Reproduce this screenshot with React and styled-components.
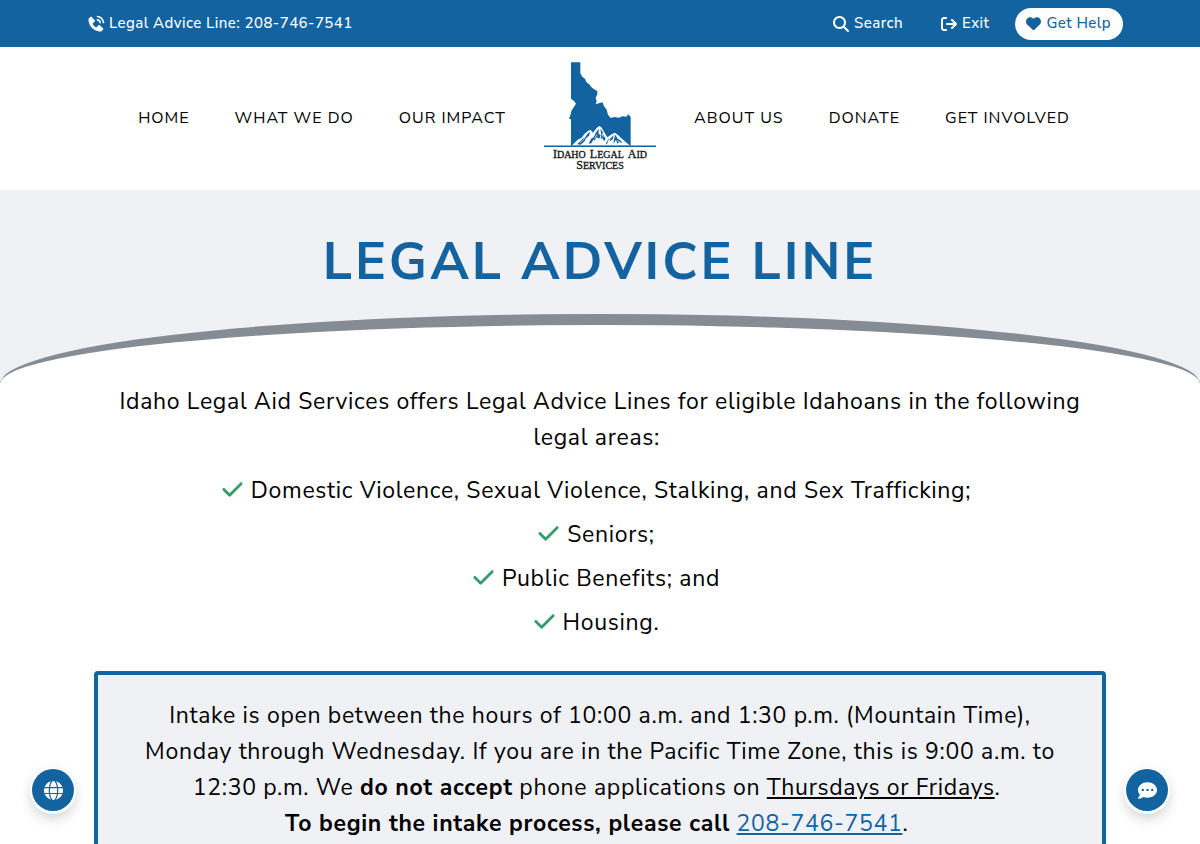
import React from "react";
import styled, { createGlobalStyle } from "styled-components";
import { BiSolidPhoneCall } from "react-icons/bi";
import {
    FaArrowRightFromBracket,
    FaCheck,
    FaCommentDots,
    FaGlobe,
    FaHeart,
    FaMagnifyingGlass,
} from "react-icons/fa6";

const blue = "#1263a0";
const pale = "#eff1f5";

const GlobalStyle = createGlobalStyle`
    * {
        box-sizing: border-box;
    }

    body {
        margin: 0;
        overflow: hidden;
        background: #fff;
        color: #000;
        font-family: "Nunito Sans", Nunito, Lato, sans-serif;
        font-size: 16px;
    }
`;

const TopBar = styled.div`
    display: flex;
    align-items: center;
    justify-content: space-between;
    height: 47px;
    padding: 0 77px 0 86px;
    background: ${blue};
`;

const TopLinks = styled.div`
    display: flex;
    align-items: center;
    gap: 26px;
`;

const TopLink = styled.a`
    display: flex;
    align-items: center;
    gap: ${({ $tight }) => ($tight ? "3px" : "5px")};
    height: 32px;
    padding: ${({ $pill }) => ($pill ? "0 12px 2px 11px" : "0 0 2px")};
    margin-left: ${({ $spaced }) => ($spaced ? "12px" : "0")};
    border-radius: 16px;
    background: ${({ $pill }) => ($pill ? "#fff" : "transparent")};
    color: ${({ $pill }) => ($pill ? blue : "#fff")};
    font-size: 15px;
    font-weight: 500;
    letter-spacing: 0.03em;
    line-height: 20px;
    text-decoration: none;

    svg {
        margin-top: 2px;
    }
`;

const Header = styled.header`
    display: flex;
    align-items: center;
    justify-content: center;
    gap: 38px;
    height: 143px;
    padding-bottom: 2px;
`;

const Nav = styled.nav`
    display: flex;
    flex: 1;
    justify-content: ${({ $side }) => ($side === "left" ? "flex-end" : "flex-start")};
    gap: 45px;
`;

const NavLink = styled.a`
    color: #000;
    font-size: 16px;
    letter-spacing: 1px;
    line-height: 24px;
    text-decoration: none;
    text-transform: uppercase;
    white-space: nowrap;
`;

const LogoLink = styled.a`
    display: flex;
    flex-direction: column;
    align-items: center;
    width: 112px;
    padding-bottom: 2px;
    color: #111;
    text-decoration: none;

    svg {
        display: block;
        width: 100%;
        height: auto;
        margin-bottom: 2px;
    }
`;

const LogoName = styled.span`
    display: flex;
    gap: 4px;
    font-family: "Liberation Serif", serif;
    font-size: 10px;
    line-height: 11px;
    text-transform: uppercase;
    white-space: nowrap;
    -webkit-text-stroke: 0.3px #111;

    span::first-letter {
        font-size: 12px;
    }
`;

const Hero = styled.section`
    padding-top: 36px;
    background: ${pale};
`;

const Title = styled.h1`
    margin: 0;
    color: ${blue};
    font-size: 52px;
    font-weight: 700;
    letter-spacing: 3px;
    line-height: 72px;
    text-align: center;
    text-transform: uppercase;
`;

const Arc = styled.div`
    height: 70px;
    margin-top: 16px;
    border-top: 11px solid #868c94;
    border-radius: 50% 50% 0 0 / 100% 100% 0 0;
    background: #fff;
`;

const Content = styled.main`
    max-width: 1012px;
    margin: 0 auto;
    font-size: 23px;
    letter-spacing: 0.03em;
    line-height: 36px;
    text-align: center;
`;

const Intro = styled.p`
    margin: 0;
    padding: 0 12px;
`;

const Areas = styled.ul`
    display: flex;
    flex-direction: column;
    gap: 8px;
    margin: 17px 0 30px;
    padding: 0 8px 0 0;
    list-style: none;
`;

const Area = styled.li`
    display: flex;
    align-items: center;
    justify-content: center;
    gap: 7px;

    svg {
        margin-bottom: 3px;
        color: #369c6c;
    }
`;

const Notice = styled.section`
    padding: 23px 40px 40px;
    border: 4px solid ${blue};
    border-radius: 4px;
    background: ${pale};

    p {
        margin: 0;
    }

    a {
        color: ${blue};
    }
`;

const RoundButton = styled.button`
    position: fixed;
    bottom: 33px;
    ${({ $side }) => $side}: 32px;
    display: flex;
    align-items: center;
    justify-content: center;
    width: 42px;
    height: 42px;
    padding: 0;
    border: 0;
    border-radius: 50%;
    background: ${blue};
    box-shadow: 0 1px 0 2px #fff, 0 6px 14px rgba(0, 0, 0, 0.22);
    color: #fff;
`;

const areas = [
    "Domestic Violence, Sexual Violence, Stalking, and Sex Trafficking;",
    "Seniors;",
    "Public Benefits; and",
    "Housing.",
];

const Logo = () => (
    <LogoLink href="#home">
        <svg viewBox="27 20 336 257" aria-hidden="true">
            <path
                fill={blue}
                d="M108 21H136V54L142 64L150 70L154 80L164 88L171 97L180 103L187 107V116L182 127L185 137L182 147L194 143L203 141L207 153L215 163L219 178L227 188L238 185L252 187L262 183L274 184L280 177L287 185V272H108V192L102 190L107 177L109 167L117 154L123 145L117 137L108 130Z"
            />
            <path
                fill="#fff"
                d="M110 271L128 253L140 247L149 235L160 226L167 224L174 232L185 218L193 212L199 216L207 229L217 246L230 237L240 232L249 239L259 249L271 259L286 271Z"
            />
            <path
                fill={blue}
                d="M127 267L142 251L151 246L157 236L166 229L162 241L153 249L149 258L137 268ZM161 265L168 251L177 244L183 231L192 220L190 234L197 240L193 250L185 246L179 256L176 252L169 264ZM196 221L203 229L205 240L212 249L207 258L202 248L197 252L199 238ZM211 268L219 253L229 247L236 238L234 251L227 257L222 254L216 265ZM241 238L248 250L255 254L262 263L252 260L247 265L243 253L235 265L237 252Z"
            />
            <path
                fill="none"
                stroke="#fff"
                strokeWidth="2"
                d="M135 262L150 249M179 251L186 237M204 246L202 234M218 257L228 251M246 255L254 260"
            />
            <path stroke={blue} strokeWidth="5" d="M27 273H363" />
        </svg>
        <LogoName>
            <span>Idaho</span> <span>Legal</span> <span>Aid</span>
        </LogoName>
        <LogoName>
            <span>Services</span>
        </LogoName>
    </LogoLink>
);

const App = () => (
    <>
        <GlobalStyle />
        <TopBar>
            <TopLink href="tel:2087467541" $tight>
                <BiSolidPhoneCall size={20} />
                Legal Advice Line: 208-746-7541
            </TopLink>
            <TopLinks>
                <TopLink href="#search">
                    <FaMagnifyingGlass size={16} />
                    Search
                </TopLink>
                <TopLink href="#exit" $spaced>
                    <FaArrowRightFromBracket size={16} />
                    Exit
                </TopLink>
                <TopLink href="#help" $pill>
                    <FaHeart size={15} />
                    Get Help
                </TopLink>
            </TopLinks>
        </TopBar>

        <Header>
            <Nav $side="left" aria-label="Main">
                <NavLink href="#home">Home</NavLink>
                <NavLink href="#work">What we do</NavLink>
                <NavLink href="#impact">Our impact</NavLink>
            </Nav>
            <Logo />
            <Nav $side="right" aria-label="More">
                <NavLink href="#about">About us</NavLink>
                <NavLink href="#donate">Donate</NavLink>
                <NavLink href="#involved">Get involved</NavLink>
            </Nav>
        </Header>

        <Hero>
            <Title>Legal Advice Line</Title>
            <Arc />
        </Hero>

        <Content>
            <Intro>
                Idaho Legal Aid Services offers Legal Advice Lines for eligible
                Idahoans in the following legal areas:&nbsp;
            </Intro>
            <Areas>
                {areas.map((area) => (
                    <Area key={area}>
                        <FaCheck size={23} />
                        {area}
                    </Area>
                ))}
            </Areas>
            <Notice>
                <p>
                    Intake is open between the hours of 10:00 a.m. and 1:30 p.m.
                    (Mountain Time), Monday through Wednesday. If you are in the
                    Pacific Time Zone, this is 9:00 a.m. to 12:30 p.m. We{" "}
                    <strong>do not accept</strong> phone applications on{" "}
                    <u>Thursdays or Fridays</u>.&nbsp;
                </p>
                <p>
                    <strong>To begin the intake process, please call</strong>{" "}
                    <a href="tel:2087467541">208-746-7541</a>.&nbsp;
                </p>
            </Notice>
        </Content>

        <RoundButton $side="left" aria-label="Change language">
            <FaGlobe size={19} />
        </RoundButton>
        <RoundButton $side="right" aria-label="Open chat">
            <FaCommentDots size={19} />
        </RoundButton>
    </>
);

export default App;
